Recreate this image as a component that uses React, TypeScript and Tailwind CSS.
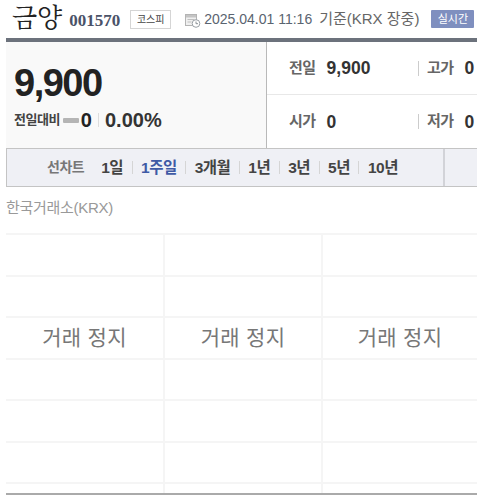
const PERIODS = ["1일", "1주일", "3개월", "1년", "3년", "5년", "10년"];
const SANS = "font-['Liberation_Sans','Noto_Sans_CJK_KR',sans-serif]";

function ClockDoc() {
  return (
    <svg width="16" height="15" viewBox="0 0 16 15" className="mt-0.5 shrink-0">
      <rect x="0.5" y="1.5" width="11" height="11" fill="#f0f0f0" stroke="#b4b4b4" />
      <rect x="1" y="2" width="10" height="2.5" fill="#c4c4c4" />
      <path d="M2.5 6.5h7M2.5 9h4" stroke="#c0c0c0" />
      <circle cx="11" cy="10.5" r="3.8" fill="#fff" stroke="#9aa0a6" />
      <path d="M11 8.5v2.2h2" stroke="#8a9096" fill="none" />
    </svg>
  );
}

function Stat({ label, value, className }: { label: string; value: string; className: string }) {
  return (
    <div className={`flex items-center ${className}`}>
      <span className="text-[15px] font-bold text-[#666] tracking-[-0.5px]">{label}</span>
      <span className="ml-[11px] text-[17.5px] font-bold leading-[20px] text-[#333]">{value}</span>
    </div>
  );
}

export default function App() {
  return (
    <div className={`w-[477px] h-[498px] overflow-hidden bg-white pl-[6px] ${SANS}`}>
      <header className="flex h-[38px] items-center whitespace-nowrap">
        <h1 className="ml-[6px] font-['Liberation_Serif','Noto_Serif_CJK_KR','Noto_Sans_CJK_KR',serif] text-[26px] leading-none text-[#222]">금양</h1>
        <span className="ml-[7px] mt-1 font-['Liberation_Serif',serif] text-[17px] font-bold text-[#4a5268]">001570</span>
        <span className="ml-[10px] flex h-[19px] w-[41px] items-center justify-center border border-[#d5d5d5] text-[10px] text-[#444]">코스피</span>
        <span className="ml-[14px]"><ClockDoc /></span>
        <span className="ml-[3px] text-[14px] text-[#5a6470]">2025.04.01 11:16</span>
        <span className="ml-[7px] text-[15px] text-[#666]">기준(KRX 장중)</span>
        <span className="ml-[12px] flex h-[18px] w-[43px] items-center justify-center rounded-[1px] bg-[#7f8fbf] text-[11px] text-white">실시간</span>
      </header>

      <div className="h-[4px] bg-[#6c727c]" />

      <section className="flex h-[106px]">
        <div className="w-[260px] bg-[#f9f9f9] pl-[8px] pt-[19px]">
          <div className="text-[38px] font-bold leading-[44px] tracking-[-1.5px] text-[#222]">9,900</div>
          <div className="flex items-center">
            <span className="text-[13px] font-bold tracking-[-0.5px] text-[#444]">전일대비</span>
            <span className="ml-[3px] h-[5px] w-[16px] rounded-[1px] bg-[#b5b5b5]" />
            <span className="ml-[2px] text-[20px] font-bold text-[#222]">0</span>
            <span className="mx-[6px] h-[14px] w-px bg-[#ddd]" />
            <span className="text-[20px] font-bold text-[#333]">0.00%</span>
          </div>
        </div>
        <div className="flex-1 border-l border-[#b9b9b9]">
          <div className="flex h-[53px] items-center border-b border-[#e8e8e8] pl-[22px]">
            <Stat label="전일" value="9,900" className="w-[129px]" />
            <span className="mr-[8px] h-[15px] w-px bg-[#ccc]" />
            <Stat label="고가" value="0" className="" />
          </div>
          <div className="flex h-[53px] items-center pl-[22px]">
            <Stat label="시가" value="0" className="w-[129px]" />
            <span className="mr-[8px] h-[15px] w-px bg-[#ccc]" />
            <Stat label="저가" value="0" className="" />
          </div>
        </div>
      </section>

      <nav className="flex h-[39px] items-center border border-r-0 border-[#c4c4c4] bg-[#eff0f5] pl-[40px] whitespace-nowrap">
        <span className="mr-[17px] text-[14px] font-bold tracking-[-0.5px] text-[#777]">선차트</span>
        {PERIODS.map((p, i) => (
          <div key={p} className="flex items-center">
            {i > 0 && <span className="mx-[8.5px] h-[13px] w-px bg-[#d5d5d5]" />}
            <span className={`text-[15.5px] font-bold tracking-[-0.5px] ${p === "1주일" ? "text-[#3f5aa5]" : "text-[#444]"}`}>{p}</span>
          </div>
        ))}
        <span className="ml-auto mr-[32px] h-full w-[2px] bg-[#d2d3d8]" />
      </nav>

      <p className="mt-[11px] h-[20px] text-[15px] leading-[20px] text-[#999] tracking-[-0.3px]">한국거래소(KRX)</p>

      <div className="mt-[15px] h-[262px] border-b-2 border-[#aaa]">
        <div className="grid h-[260px] grid-cols-[159px_158px_1fr]">
          {[0, 1, 2].map((col) => (
            <div key={col} className={`flex flex-col ${col < 2 ? "border-r-2 border-[#f5f5f5]" : ""}`}>
              {[0, 1, 2, 3, 4, 5, 6].map((row) => (
                <div key={row} className={`flex shrink-0 items-center justify-center border-t-2 border-[#f5f5f5] ${row === 6 ? "h-[11px]" : "h-[41.5px]"}`}>
                  {row === 2 && <span className="text-[21px] tracking-[0.3px] text-[#777]">거래 정지</span>}
                </div>
              ))}
            </div>
          ))}
        </div>
      </div>
    </div>
  );
}
